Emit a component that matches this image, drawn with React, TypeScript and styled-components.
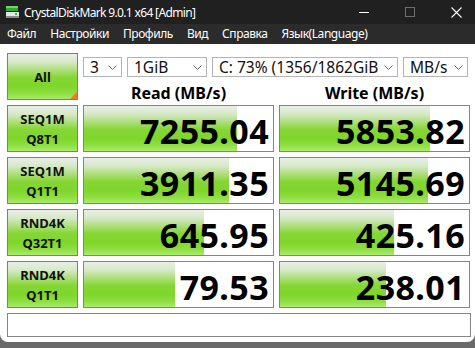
import React from "react";
import styled, { createGlobalStyle } from "styled-components";

const GlobalStyle = createGlobalStyle`
  html, body {
    margin: 0;
    padding: 0;
  }
  body {
    width: 475px;
    height: 348px;
    overflow: hidden;
    background: linear-gradient(to bottom, #4a4a4a, #6a6a6a);
    font-family: "Noto Sans", "Open Sans", sans-serif;
  }
`;

const Window = styled.div`
  width: 475px;
  height: 342px;
  background: #ffffff;
  border-radius: 0 0 8px 8px;
  overflow: hidden;
  display: flex;
  flex-direction: column;
`;

const TitleBar = styled.div`
  height: 24px;
  background: #202020;
  display: flex;
  align-items: center;
  color: #ffffff;
  font-size: 12px;
`;

const AppIcon = styled.div`
  width: 24px;
  display: flex;
  justify-content: center;
`;

const Title = styled.div`
  flex: 1;
  padding-top: 1px;
  letter-spacing: -0.65px;
`;

const Controls = styled.div`
  display: flex;
  margin-right: -4px;
`;

const ControlButton = styled.div`
  width: 46px;
  height: 24px;
  display: flex;
  align-items: center;
  justify-content: center;
`;

const MenuBar = styled.div`
  height: 20px;
  background: #2b2b2b;
  display: flex;
  align-items: center;
  color: #ffffff;
  font-size: 12px;
  letter-spacing: -0.45px;
`;

const MenuItem = styled.div`
  padding: 0 7px;
  line-height: 20px;
`;

const Board = styled.div`
  display: grid;
  grid-template-columns: 71px 191px 191px;
  grid-auto-rows: 47px;
  gap: 5px;
  padding: 9px 0 0 7px;
`;

const barGradient = `linear-gradient(
  to bottom,
  #eaeee7 0%,
  #d6e9c6 18%,
  #a8dd72 38%,
  #86d636 52%,
  #7fd62b 72%,
  #8fdf42 88%,
  #a9ea6c 100%
)`;

const LabelCell = styled.div<{ $corner?: boolean }>`
  position: relative;
  box-sizing: border-box;
  border: 1px solid #7e7e7e;
  background: ${barGradient};
  display: flex;
  flex-direction: column;
  align-items: center;
  justify-content: center;
  font-size: 13px;
  font-weight: 700;
  line-height: 20px;
  color: #111;
  padding-top: ${(p) => (p.$corner ? "0" : "1px")};

  &::after {
    content: "";
    display: ${(p) => (p.$corner ? "block" : "none")};
    position: absolute;
    right: 0;
    bottom: 0;
    width: 0;
    height: 0;
    border-left: 7px solid transparent;
    border-bottom: 7px solid #ef7d22;
  }
`;

const Header = styled.div`
  grid-column: 2 / span 2;
  display: flex;
  flex-direction: column;
`;

const SelectRow = styled.div`
  display: flex;
  gap: 5px;
  padding-top: 4px;
`;

const Select = styled.div<{ $w: number }>`
  width: ${(p) => p.$w}px;
  height: 20px;
  box-sizing: border-box;
  border: 1px solid #b4b4b4;
  background: #fff;
  display: flex;
  align-items: center;
  font-size: 15.5px;
  color: #111;
  padding: 0 0 0 6px;
`;

// long entries run under the chevron, which paints over them
const SelectText = styled.span`
  flex: 1;
  min-width: 0;
  white-space: nowrap;
  line-height: 18px;
`;

const Chevron = styled.span`
  width: 18px;
  height: 18px;
  flex: none;
  display: flex;
  align-items: center;
  justify-content: center;
  background: #fff;
`;

const ColumnTitles = styled.div`
  display: grid;
  grid-template-columns: 191px 191px;
  gap: 5px;
  margin-top: 6px;
`;

const ColumnTitle = styled.div`
  text-align: center;
  font-size: 16px;
  font-weight: 700;
  line-height: 20px;
  color: #000;
`;

const ValueCell = styled.div`
  box-sizing: border-box;
  border: 1px solid #858585;
  background-color: #fff;
  background-image: ${barGradient};
  background-repeat: no-repeat;
  display: flex;
  align-items: center;
  justify-content: flex-end;
  padding: 4px 4px 0 0;
  font-size: 34px;
  font-weight: 700;
  color: #000;
  letter-spacing: 0.4px;
  overflow: hidden;
`;

const Comment = styled.div`
  margin: 5px 0 0 7px;
  width: 464px;
  height: 24px;
  box-sizing: border-box;
  border: 1px solid #858585;
`;

type Result = { name: string; sub: string; read: number; write: number };

const results: Result[] = [
  { name: "SEQ1M", sub: "Q8T1", read: 7255.04, write: 5853.82 },
  { name: "SEQ1M", sub: "Q1T1", read: 3911.35, write: 5145.69 },
  { name: "RND4K", sub: "Q32T1", read: 645.95, write: 425.16 },
  { name: "RND4K", sub: "Q1T1", read: 79.53, write: 238.01 },
];

// bar length follows a log scale like the real app
const barWidth = (v: number) => Math.round(31 + 31.6 * Math.log10(v));

function ChevronIcon() {
  return (
    <svg width="9" height="5" viewBox="0 0 9 5">
      <path d="M0.5 0.5 L4.5 4.5 L8.5 0.5" fill="none" stroke="#6a6a6a" strokeWidth="1" />
    </svg>
  );
}

function Value({ v }: { v: number }) {
  return (
    <ValueCell style={{ backgroundSize: `${barWidth(v)}px 100%` }}>
      {v.toFixed(2)}
    </ValueCell>
  );
}

export default function App() {
  return (
    <>
      <GlobalStyle />
      <Window>
        <TitleBar>
          <AppIcon>
            <svg width="15" height="16" viewBox="0 0 15 16">
              <rect x="1" y="2" width="12" height="5" fill="#2fa83a" />
              <rect x="1" y="2" width="12" height="2" fill="#6fd46a" />
              <rect x="1" y="8" width="13" height="4" fill="#e6e6e6" />
              <rect x="1" y="12" width="13" height="2" fill="#8a8a8a" />
              <rect x="10" y="9" width="2" height="2" fill="#3cbf3c" />
            </svg>
          </AppIcon>
          <Title>CrystalDiskMark 9.0.1 x64 [Admin]</Title>
          <Controls>
            <ControlButton>
              <svg width="10" height="10" viewBox="0 0 10 10">
                <line x1="0" y1="5.5" x2="10" y2="5.5" stroke="#fff" strokeWidth="1" />
              </svg>
            </ControlButton>
            <ControlButton>
              <svg width="10" height="10" viewBox="0 0 10 10">
                <rect x="0.5" y="0.5" width="9" height="9" fill="none" stroke="#6e6e6e" strokeWidth="1" />
              </svg>
            </ControlButton>
            <ControlButton>
              <svg width="11" height="11" viewBox="0 0 11 11">
                <path d="M0.5 0.5 L10.5 10.5 M10.5 0.5 L0.5 10.5" stroke="#fff" strokeWidth="1.1" />
              </svg>
            </ControlButton>
          </Controls>
        </TitleBar>
        <MenuBar>
          <MenuItem>Файл</MenuItem>
          <MenuItem>Настройки</MenuItem>
          <MenuItem>Профиль</MenuItem>
          <MenuItem>Вид</MenuItem>
          <MenuItem>Справка</MenuItem>
          <MenuItem>Язык(Language)</MenuItem>
        </MenuBar>
        <Board>
          <LabelCell $corner>All</LabelCell>
          <Header>
            <SelectRow>
              <Select $w={39}>
                <SelectText>3</SelectText>
                <Chevron><ChevronIcon /></Chevron>
              </Select>
              <Select $w={80}>
                <SelectText>1GiB</SelectText>
                <Chevron><ChevronIcon /></Chevron>
              </Select>
              <Select $w={186}>
                <SelectText>C: 73% (1356/1862GiB)</SelectText>
                <Chevron><ChevronIcon /></Chevron>
              </Select>
              <Select $w={65}>
                <SelectText>MB/s</SelectText>
                <Chevron><ChevronIcon /></Chevron>
              </Select>
            </SelectRow>
            <ColumnTitles>
              <ColumnTitle>Read (MB/s)</ColumnTitle>
              <ColumnTitle>Write (MB/s)</ColumnTitle>
            </ColumnTitles>
          </Header>
          {results.map((r, i) => (
            <React.Fragment key={i}>
              <LabelCell>
                <span>{r.name}</span>
                <span>{r.sub}</span>
              </LabelCell>
              <Value v={r.read} />
              <Value v={r.write} />
            </React.Fragment>
          ))}
        </Board>
        <Comment />
      </Window>
    </>
  );
}
